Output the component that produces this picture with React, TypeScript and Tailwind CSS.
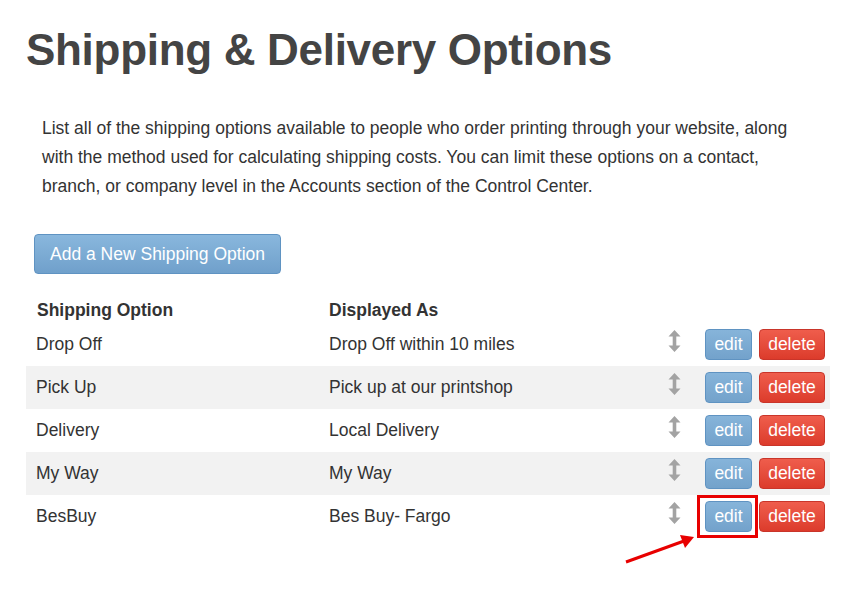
import React from 'react';

const rows = [
  { name: 'Drop Off', shown: 'Drop Off within 10 miles' },
  { name: 'Pick Up', shown: 'Pick up at our printshop' },
  { name: 'Delivery', shown: 'Local Delivery' },
  { name: 'My Way', shown: 'My Way' },
  { name: 'BesBuy', shown: 'Bes Buy- Fargo' },
];

const SortIcon = () => (
  <svg width="13" height="22" viewBox="0 0 13 22" className="text-[#a3a3a3]">
    <path d="M6.5 0 L12.5 6.5 L8.3 6.5 L8.3 15.5 L12.5 15.5 L6.5 22 L0.5 15.5 L4.7 15.5 L4.7 6.5 L0.5 6.5 Z" fill="currentColor" />
  </svg>
);

const App: React.FC = () => {
  return (
    <div className="relative w-[844px] h-[602px] bg-white overflow-hidden font-['Liberation_Sans',Arial,sans-serif]">
      <h1 className="pl-[26px] pt-[24px] text-[44px] leading-[51px] font-bold tracking-[-0.3px] text-[#444444]">
        Shipping &amp; Delivery Options
      </h1>

      <p className="ml-[42px] mt-[39px] w-[748px] text-[17.5px] leading-[29px] text-[#333333]">
        List all of the shipping options available to people who order printing through your website, along with the method used for calculating shipping costs. You can limit these options on a contact, branch, or company level in the Accounts section of the Control Center.
      </p>

      <button className="ml-[34px] mt-[33px] h-[40px] w-[247px] rounded-[4px] border border-[#5f93c2] bg-gradient-to-b from-[#89b7dd] to-[#70a0cb] text-[17.5px] text-white">
        Add a New Shipping Option
      </button>

      <div className="ml-[26px] mt-[23px] w-[804px]">
        <div className="flex h-[26px] items-center text-[17.5px] font-bold text-[#333333]">
          <div className="w-[303px] pl-[11px]">Shipping Option</div>
          <div>Displayed As</div>
        </div>
        {rows.map((r, i) => (
          <div
            key={r.name}
            className={`flex h-[43px] items-center text-[17.5px] text-[#333333] ${i % 2 === 1 ? 'bg-[#f2f2f2]' : 'bg-white'}`}
          >
            <div className="w-[303px] pl-[10px]">{r.name}</div>
            <div className="w-[339px]">{r.shown}</div>
            <div className="w-[37px] flex justify-start -mt-[7px]">
              <SortIcon />
            </div>
            <button className="h-[31px] w-[47px] rounded-[4px] border border-[#5f93c2] bg-gradient-to-b from-[#86b4da] to-[#73a2cb] text-[17.5px] text-white">
              edit
            </button>
            <button className="ml-[7px] h-[31px] w-[66px] rounded-[4px] border border-[#c9352a] bg-gradient-to-b from-[#ef5d4c] to-[#dc3b2b] text-[17.5px] text-white">
              delete
            </button>
          </div>
        ))}
      </div>

      {/* annotation */}
      <div className="absolute left-[697px] top-[495px] h-[43px] w-[61px] border-[3px] border-[#e80000]" />
      <svg className="absolute left-[620px] top-[528px]" width="80" height="40" viewBox="0 0 80 40">
        <line x1="6" y1="34" x2="64" y2="13" stroke="#e80000" strokeWidth="3" />
        <path d="M74 9 L60 7 L65 20 Z" fill="#e80000" />
      </svg>
    </div>
  );
};

export default App;
